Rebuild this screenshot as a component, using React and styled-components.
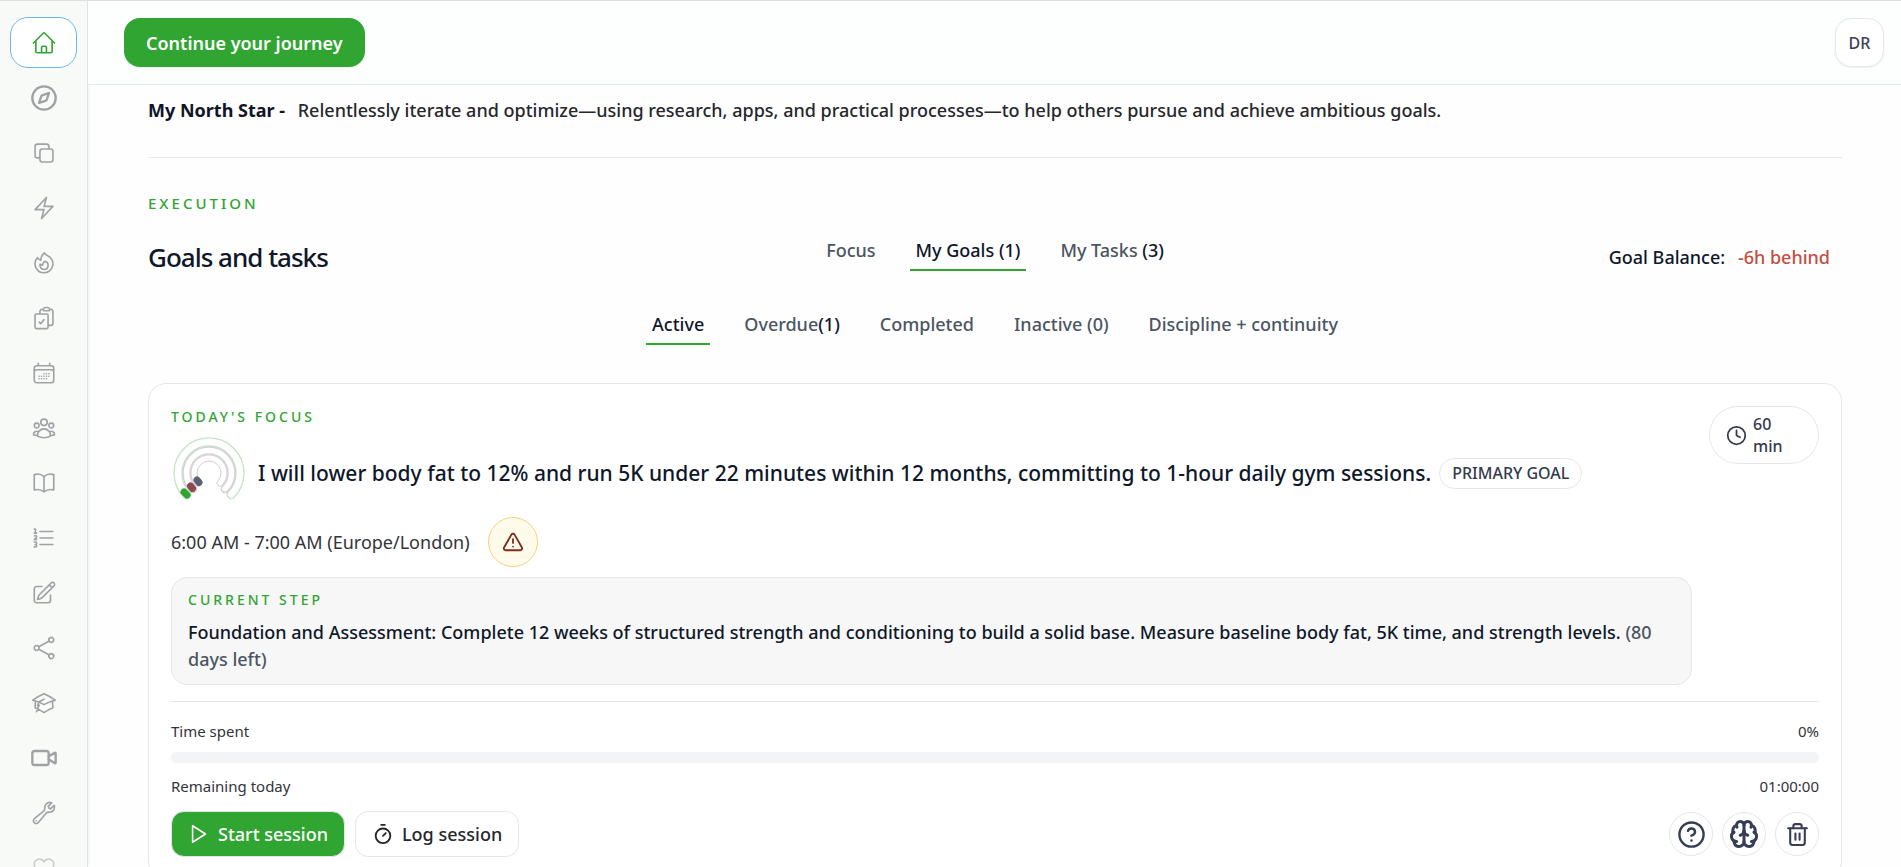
import React from "react";
import styled, { createGlobalStyle } from "styled-components";
import {
  HiOutlineHome,
  HiOutlineSquare2Stack,
  HiOutlineBolt,
  HiOutlineFire,
  HiOutlineClipboardDocumentCheck,
  HiOutlineCalendarDays,
  HiOutlineUserGroup,
  HiOutlineBookOpen,
  HiOutlineNumberedList,
  HiOutlinePencilSquare,
  HiOutlineShare,
  HiOutlineAcademicCap,
  HiOutlineWrench,
  HiOutlineHeart,
} from "react-icons/hi2";
import { FiPlay } from "react-icons/fi";
import {
  Brain,
  CircleQuestionMark,
  Clock,
  Compass,
  Timer,
  Trash2,
  TriangleAlert,
  Video,
} from "lucide-react";

const GlobalStyle = createGlobalStyle`
  * {
    box-sizing: border-box;
  }

  body {
    margin: 0;
    background: #fefefe;
    color: #0f172a;
    font-family: "Segoe UI", "Noto Sans", "Open Sans", sans-serif;
    font-size: 18px;
  }

  button {
    font: inherit;
    cursor: pointer;
  }

  h1, h2, p {
    margin: 0;
  }
`;

const Page = styled.div`
  display: flex;
  height: 100vh;
  overflow: hidden;
  border-top: 1px solid #dfe1e0;
`;

const Sidebar = styled.nav`
  flex: none;
  width: 88px;
  padding: 16px 10px 0;
  display: flex;
  flex-direction: column;
  gap: 4px;
  overflow: hidden;
  background: #f8faf7;
  border-right: 1px solid #e1e4e6;
  box-shadow: 1px 0 3px rgba(15, 23, 42, 0.05);
`;

const NavItem = styled.a`
  flex: none;
  display: flex;
  align-items: center;
  justify-content: center;
  height: 51px;
  border-radius: 18px;
  border: 1px solid ${(p) => (p.$active ? "#6cb6f0" : "transparent")};
  background: ${(p) => (p.$active ? "#fff" : "none")};
  color: ${(p) => (p.$active ? "#30a532" : "#a1a1a5")};
  opacity: ${(p) => (p.$faded ? 0.5 : 1)};
`;

const Content = styled.div`
  flex: 1;
  min-width: 0;
`;

const TopBar = styled.header`
  display: flex;
  align-items: center;
  justify-content: space-between;
  height: 84px;
  padding: 0 17px 0 36px;
  background: #fdfefe;
  border-bottom: 1px solid #e4e7ea;
`;

const JourneyButton = styled.button`
  height: 49px;
  padding: 0 22px;
  border: none;
  border-radius: 16px;
  background: #30a532;
  color: #fff;
  font-weight: 600;
  box-shadow: 0 1px 2px rgba(15, 23, 42, 0.08);
`;

const Avatar = styled.button`
  width: 49px;
  height: 49px;
  padding: 0;
  border: 1px solid #e5e7eb;
  border-radius: 16px;
  background: #fff;
  color: #3b4255;
  font-size: 16px;
  font-weight: 500;
  box-shadow: 0 1px 2px rgba(15, 23, 42, 0.06);
`;

const Main = styled.main`
  padding: 11px 59px 0 60px;
`;

const NorthStar = styled.p`
  padding-bottom: 33px;
  border-bottom: 1px solid #e5e7eb;
  color: #26272c;
  font-weight: 500;
  line-height: 28px;

  strong {
    margin-right: 8px;
    color: #0f1527;
    font-weight: 700;
  }
`;

const Eyebrow = styled.p`
  color: #30a532;
  font-size: ${(p) => (p.$large ? "15px" : "14px")};
  font-weight: 500;
  line-height: 22px;
  letter-spacing: 3px;
  text-transform: uppercase;
`;

const Section = styled.section`
  padding-top: 34px;
`;

const SectionHead = styled.div`
  display: grid;
  grid-template-columns: 1fr auto 1fr;
  align-items: center;
  height: 50px;
  margin-top: 18px;
`;

const Title = styled.h1`
  font-size: 26px;
  font-weight: 500;
  letter-spacing: -1px;
  line-height: 36px;
`;

const Tabs = styled.div`
  display: flex;
  justify-content: center;
  align-self: start;
  gap: 28px;
`;

const StatusTabs = styled(Tabs)`
  margin: 24px 0 38px;
`;

const Tab = styled.button`
  padding: 4px 6px 5px;
  border: none;
  border-bottom: 2px solid ${(p) => (p.$active ? "#30a532" : "transparent")};
  background: none;
  color: ${(p) => (p.$active ? "#0f172a" : "#4b5563")};
  font-weight: 500;
  line-height: 28px;

  span {
    color: #0f172a;
  }
`;

const Balance = styled.p`
  padding-right: 12px;
  font-weight: 500;
  text-align: right;

  span {
    margin-left: 8px;
    color: #c24e42;
  }
`;

const Card = styled.article`
  padding: 22px;
  border: 1px solid #e5e7eb;
  border-radius: 18px;
  background: #fff;
`;

const CardTop = styled.div`
  display: flex;
  align-items: flex-start;
  gap: 17px;
  padding-bottom: 16px;
  border-bottom: 1px solid #e5e7eb;
`;

const CardInfo = styled.div`
  flex: 1;
  min-width: 0;
`;

const GoalRow = styled.div`
  display: flex;
  align-items: center;
  margin: 7px 0 6px;
`;

const Gauge = styled.svg`
  flex: none;
  margin-right: 11px;
`;

const GoalTitle = styled.h2`
  font-size: 21px;
  font-weight: 500;
  line-height: 30px;
`;

const Badge = styled.span`
  margin-left: 8px;
  padding: 0 12px;
  border: 1px solid #e5e7eb;
  border-radius: 16px;
  color: #333a4d;
  font-size: 16px;
  font-weight: 500;
  line-height: 29px;
  white-space: nowrap;
`;

const ScheduleRow = styled.div`
  display: flex;
  align-items: center;
  gap: 18px;
  color: #33343a;
`;

const WarningButton = styled.button`
  display: flex;
  align-items: center;
  justify-content: center;
  width: 50px;
  height: 50px;
  padding: 0;
  border: 1px solid #f9cf7c;
  border-radius: 50%;
  background: #fffbeb;
  color: #7c2d1e;
`;

const StepBox = styled.div`
  margin-top: 10px;
  padding: 11px 16px;
  border: 1px solid #e5e7eb;
  border-radius: 16px;
  background: #f7f7f7;
`;

const StepText = styled.p`
  margin-top: 8px;
  font-weight: 500;
  line-height: 27px;

  span {
    color: #4b5563;
  }
`;

const Duration = styled.div`
  flex: none;
  display: flex;
  align-items: center;
  gap: 6px;
  width: 110px;
  padding: 6px 36px 6px 16px;
  border: 1px solid #e5e7eb;
  border-radius: 29px;
  color: #333a4d;
  font-size: 16px;
  font-weight: 500;
  line-height: 22px;

  svg {
    flex: none;
  }
`;

const StatRow = styled.div`
  display: flex;
  justify-content: space-between;
  color: #33343a;
  font-size: 15px;
  line-height: 22px;
`;

const Progress = styled.div`
  margin-top: 18px;
`;

const Track = styled.div`
  height: 11px;
  margin: 10px 0 12px;
  border-radius: 6px;
  background: #f3f4f6;
`;

const Actions = styled.div`
  display: flex;
  align-items: center;
  gap: 10px;
  margin-top: 14px;
`;

const SessionButton = styled.button`
  display: flex;
  align-items: center;
  gap: 8px;
  height: 46px;
  padding: 0 16px;
  border: 1px solid #e5e7eb;
  border-radius: 13px;
  background: ${(p) => (p.$primary ? "#30a532" : "#fff")};
  color: ${(p) => (p.$primary ? "#fff" : "#26272c")};
  font-weight: 500;
`;

const IconGroup = styled.div`
  display: flex;
  gap: 9px;
  margin-left: auto;
`;

const IconButton = styled.button`
  display: flex;
  align-items: center;
  justify-content: center;
  width: 44px;
  height: 44px;
  padding: 0;
  border: 1px solid #e5e7eb;
  border-radius: 50%;
  background: #fff;
  color: #363d54;
`;

const navItems = [
  { label: "Home", icon: <HiOutlineHome size={26} />, active: true },
  { label: "Explore", icon: <Compass size={28} strokeWidth={2} /> },
  { label: "Templates", icon: <HiOutlineSquare2Stack size={26} /> },
  { label: "Actions", icon: <HiOutlineBolt size={26} /> },
  { label: "Streaks", icon: <HiOutlineFire size={26} /> },
  { label: "Tasks", icon: <HiOutlineClipboardDocumentCheck size={26} /> },
  { label: "Calendar", icon: <HiOutlineCalendarDays size={26} /> },
  { label: "Community", icon: <HiOutlineUserGroup size={26} /> },
  { label: "Library", icon: <HiOutlineBookOpen size={26} /> },
  { label: "Lists", icon: <HiOutlineNumberedList size={26} /> },
  { label: "Journal", icon: <HiOutlinePencilSquare size={26} /> },
  { label: "Share", icon: <HiOutlineShare size={26} /> },
  { label: "Learn", icon: <HiOutlineAcademicCap size={26} /> },
  { label: "Video", icon: <Video size={28} strokeWidth={2} /> },
  { label: "Tools", icon: <HiOutlineWrench size={26} /> },
  { label: "Favourites", icon: <HiOutlineHeart size={26} />, faded: true },
];

function GoalGauge() {
  return (
    <Gauge width="76" height="76" viewBox="0 0 76 76" fill="none" aria-hidden="true">
      {/* outer, middle and inner tracks, each an outlined 270 degree band */}
      <path
        d="M13.3 62.7A35 35 0 1 1 62.7 62.7A4 4 0 0 1 57.1 57.1A27 27 0 1 0 18.9 57.1A4 4 0 0 1 13.3 62.7Z"
        stroke="#c3e4c5"
        strokeWidth="1.3"
      />
      <path
        d="M19.6 56.4A26 26 0 1 1 56.4 56.4A3.5 3.5 0 0 1 51.4 51.4A19 19 0 1 0 24.6 51.4A3.5 3.5 0 0 1 19.6 56.4Z"
        stroke="#d8d2d6"
        strokeWidth="1.5"
      />
      <path
        d="M25.3 50.7A18 18 0 1 1 50.7 50.7A3 3 0 0 1 46.5 46.5A12 12 0 1 0 29.5 46.5A3 3 0 0 1 25.3 50.7Z"
        stroke="#d3cfd3"
      />
      <g strokeWidth="7" strokeLinecap="round">
        <path d="M13 57L16 60" stroke="#30a532" />
        <path d="M19.5 51L21.5 53.5" stroke="#8b4a4f" />
        <path d="M26 45L28 47.5" stroke="#5b6072" />
      </g>
    </Gauge>
  );
}

function FocusCard() {
  return (
    <Card>
      <CardTop>
        <CardInfo>
          <Eyebrow>Today's focus</Eyebrow>
          <GoalRow>
            <GoalGauge />
            <GoalTitle>
              I will lower body fat to 12% and run 5K under 22 minutes within 12 months, committing
              to 1-hour daily gym sessions.
            </GoalTitle>
            <Badge>PRIMARY GOAL</Badge>
          </GoalRow>
          <ScheduleRow>
            <span>6:00 AM - 7:00 AM (Europe/London)</span>
            <WarningButton aria-label="Schedule warning">
              <TriangleAlert size={22} />
            </WarningButton>
          </ScheduleRow>
          <StepBox>
            <Eyebrow>Current step</Eyebrow>
            <StepText>
              Foundation and Assessment: Complete 12 weeks of structured strength and conditioning
              to build a solid base. Measure baseline body fat, 5K time, and strength levels.{" "}
              <span>(80 days left)</span>
            </StepText>
          </StepBox>
        </CardInfo>
        <Duration>
          <Clock size={21} />
          60 min
        </Duration>
      </CardTop>

      <Progress>
        <StatRow>
          <span>Time spent</span>
          <span>0%</span>
        </StatRow>
        <Track role="progressbar" aria-label="Time spent" aria-valuenow={0} />
        <StatRow>
          <span>Remaining today</span>
          <span>01:00:00</span>
        </StatRow>
      </Progress>

      <Actions>
        <SessionButton $primary>
          <FiPlay size={22} strokeWidth={1.7} />
          Start session
        </SessionButton>
        <SessionButton>
          <Timer size={22} />
          Log session
        </SessionButton>
        <IconGroup>
          <IconButton aria-label="Help">
            <CircleQuestionMark size={29} />
          </IconButton>
          <IconButton aria-label="Insights">
            <Brain size={30} strokeWidth={2.4} />
          </IconButton>
          <IconButton aria-label="Delete goal">
            <Trash2 size={25} />
          </IconButton>
        </IconGroup>
      </Actions>
    </Card>
  );
}

function App() {
  return (
    <Page>
      <GlobalStyle />
      <Sidebar>
        {navItems.map((item) => (
          <NavItem
            key={item.label}
            href="#"
            aria-label={item.label}
            $active={item.active}
            $faded={item.faded}
          >
            {item.icon}
          </NavItem>
        ))}
      </Sidebar>

      <Content>
        <TopBar>
          <JourneyButton>Continue your journey</JourneyButton>
          <Avatar>DR</Avatar>
        </TopBar>

        <Main>
          <NorthStar>
            <strong>My North Star -</strong> Relentlessly iterate and optimize—using research,
            apps, and practical processes—to help others pursue and achieve ambitious goals.
          </NorthStar>

          <Section>
            <Eyebrow $large>Execution</Eyebrow>
            <SectionHead>
              <Title>Goals and tasks</Title>
              <Tabs>
                <Tab>Focus</Tab>
                <Tab $active>My Goals (1)</Tab>
                <Tab>
                  My Tasks <span>(3)</span>
                </Tab>
              </Tabs>
              <Balance>
                Goal Balance: <span>-6h behind</span>
              </Balance>
            </SectionHead>

            <StatusTabs>
              <Tab $active>Active</Tab>
              <Tab>
                Overdue<span>(1)</span>
              </Tab>
              <Tab>Completed</Tab>
              <Tab>Inactive (0)</Tab>
              <Tab>Discipline + continuity</Tab>
            </StatusTabs>

            <FocusCard />
          </Section>
        </Main>
      </Content>
    </Page>
  );
}

export default App;
